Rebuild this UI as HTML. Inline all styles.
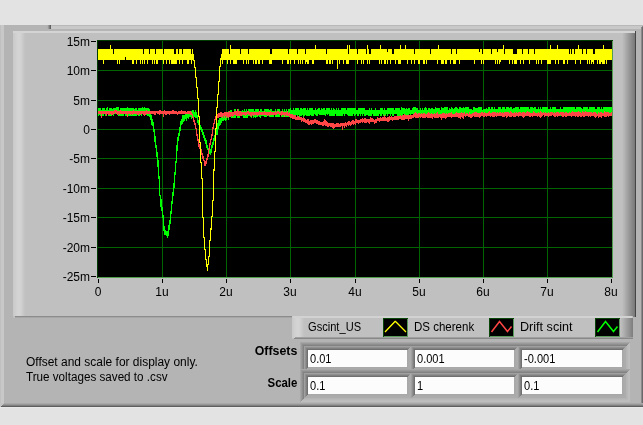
<!DOCTYPE html>
<html><head><meta charset="utf-8"><title>Scope display</title>
<style>
html,body{margin:0;padding:0}
body{width:643px;height:425px;background:#e3e3e3;position:relative;overflow:hidden;font-family:"Liberation Sans",sans-serif;font-size:12px;color:#000}
div{position:absolute;box-sizing:border-box}
svg{position:absolute;display:block}
.chrome{left:0;top:0}
.plot{left:97px;top:40px}
.tk{background:#000}
.yl,.xl,.lt,.cell,.b,.tx{will-change:transform}
.sx{display:inline-block;transform-origin:0 50%;white-space:nowrap}
.yl{left:41px;width:49px;text-align:right;height:16px;line-height:16px;white-space:nowrap}
.xl{top:284px;width:40px;text-align:center;height:16px;line-height:16px;white-space:nowrap}
.lt{top:319px;height:16px;line-height:16px;white-space:nowrap}
.cell{height:17px;line-height:17px;white-space:nowrap}
.b{font-weight:bold;white-space:nowrap;height:16px;line-height:16px}
.b .sx{transform-origin:100% 50%}
</style></head><body>
<svg class="chrome" width="643" height="425" viewBox="0 0 643 425" shape-rendering="crispEdges"><rect x="0" y="25" width="643" height="382" fill="#b4b4b4"/><rect x="0" y="25" width="1" height="382" fill="#c0c0c0"/><rect x="1" y="25" width="3" height="380" fill="#c8c8c8"/><rect x="47" y="25" width="596" height="1" fill="#b8b8b8"/><rect x="51" y="26" width="592" height="3" fill="#c8c8c8"/><rect x="47" y="25" width="1" height="4" fill="#b0b0b0"/><rect x="48" y="25" width="1" height="4" fill="#989898"/><rect x="49" y="25" width="1" height="4" fill="#7c7c7c"/><rect x="50" y="25" width="1" height="4" fill="#606060"/><polygon points="641,28 643,25 643,407 641,407" fill="#8a8a8a"/><polygon points="642,27 643,26 643,407 642,407" fill="#6a6a6a"/><rect x="0" y="403" width="643" height="1" fill="#a8a8a8"/><rect x="0" y="404" width="643" height="1" fill="#989898"/><rect x="0" y="405" width="643" height="1" fill="#808080"/><rect x="0" y="406" width="643" height="1" fill="#5e5e5e"/><rect x="0" y="407" width="643" height="1" fill="#e9e9e9"/><polygon points="0,403 4,403 0,407" fill="#c4c4c4"/><rect x="13" y="31" width="623" height="286" fill="#c0c0c0"/><rect x="13" y="31" width="1" height="285" fill="#cacaca"/><rect x="14" y="31" width="1" height="285" fill="#cccccc"/><rect x="15" y="31" width="1" height="285" fill="#cfcfcf"/><rect x="16" y="31" width="1" height="285" fill="#d1d1d1"/><rect x="17" y="31" width="1" height="285" fill="#d3d3d3"/><rect x="18" y="31" width="1" height="285" fill="#d4d4d4"/><rect x="19" y="31" width="1" height="285" fill="#d4d4d4"/><rect x="20" y="31" width="1" height="285" fill="#d2d2d2"/><rect x="21" y="31" width="1" height="285" fill="#cfcfcf"/><rect x="22" y="31" width="1" height="285" fill="#cbcbcb"/><rect x="23" y="31" width="1" height="285" fill="#c7c7c7"/><rect x="24" y="31" width="1" height="285" fill="#c3c3c3"/><rect x="25" y="31" width="1" height="285" fill="#c1c1c1"/><rect x="13" y="31" width="622" height="2" fill="#d4d4d4"/><rect x="622" y="33" width="1" height="284" fill="#bebebe"/><rect x="623" y="33" width="1" height="284" fill="#b8b8b8"/><rect x="624" y="33" width="1" height="284" fill="#b3b3b3"/><rect x="625" y="33" width="1" height="284" fill="#adadad"/><rect x="626" y="33" width="1" height="284" fill="#a7a7a7"/><rect x="627" y="33" width="1" height="284" fill="#a2a2a2"/><rect x="628" y="33" width="1" height="284" fill="#9c9c9c"/><rect x="629" y="33" width="1" height="284" fill="#969696"/><rect x="630" y="33" width="1" height="284" fill="#919191"/><rect x="631" y="33" width="1" height="284" fill="#8b8b8b"/><rect x="632" y="33" width="1" height="284" fill="#858585"/><rect x="633" y="33" width="1" height="284" fill="#808080"/><rect x="634" y="33" width="1" height="284" fill="#7a7a7a"/><polygon points="622,31 635,31 622,33" fill="#d4d4d4"/><rect x="635" y="31" width="1" height="286" fill="#464646"/><rect x="15" y="316" width="278" height="1" fill="#8c8c8c"/><rect x="15" y="317" width="278" height="1" fill="#a6a6a6"/><polygon points="13,316 15,316 15,318 13,318" fill="#c0c0c0"/><rect x="292" y="316" width="341" height="23" fill="#c0c0c0"/><rect x="292" y="316" width="1" height="22" fill="#cacaca"/><rect x="293" y="316" width="1" height="22" fill="#cccccc"/><rect x="294" y="316" width="1" height="22" fill="#cfcfcf"/><rect x="295" y="316" width="1" height="22" fill="#d1d1d1"/><rect x="296" y="316" width="1" height="22" fill="#d3d3d3"/><rect x="297" y="316" width="1" height="22" fill="#d4d4d4"/><rect x="298" y="316" width="1" height="22" fill="#d4d4d4"/><rect x="299" y="316" width="1" height="22" fill="#d2d2d2"/><rect x="300" y="316" width="1" height="22" fill="#cfcfcf"/><rect x="301" y="316" width="1" height="22" fill="#cbcbcb"/><rect x="302" y="316" width="1" height="22" fill="#c7c7c7"/><rect x="303" y="316" width="1" height="22" fill="#c3c3c3"/><rect x="304" y="316" width="1" height="22" fill="#c1c1c1"/><rect x="293" y="316" width="339" height="2" fill="#d2d2d2"/><rect x="621" y="318" width="1" height="21" fill="#bcbcbc"/><rect x="622" y="318" width="1" height="21" fill="#b7b7b7"/><rect x="623" y="318" width="1" height="21" fill="#b1b1b1"/><rect x="624" y="318" width="1" height="21" fill="#acacac"/><rect x="625" y="318" width="1" height="21" fill="#a6a6a6"/><rect x="626" y="318" width="1" height="21" fill="#a1a1a1"/><rect x="627" y="318" width="1" height="21" fill="#9b9b9b"/><rect x="628" y="318" width="1" height="21" fill="#969696"/><rect x="629" y="318" width="1" height="21" fill="#909090"/><rect x="630" y="318" width="1" height="21" fill="#8b8b8b"/><rect x="631" y="318" width="1" height="21" fill="#858585"/><rect x="632" y="318" width="1" height="21" fill="#808080"/><rect x="295" y="337" width="338" height="1" fill="#a0a0a0"/><rect x="294" y="338" width="339" height="1" fill="#888888"/><rect x="383" y="318" width="25" height="19" fill="#000"/><polygon points="383,318 408,318 407,319 384,319 384,336 383,337" fill="#0a460a"/><polygon points="408,318 408,337 383,337 384,336 407,336 407,319" fill="#5a9a5a"/><path d="M385 332L395 321.5L395.5 321.5L406 332" stroke="#ffff00" stroke-width="1.3" fill="none" shape-rendering="auto"/><rect x="489" y="318" width="25" height="19" fill="#000"/><polygon points="489,318 514,318 513,319 490,319 490,336 489,337" fill="#0a460a"/><polygon points="514,318 514,337 489,337 490,336 513,336 513,319" fill="#5a9a5a"/><path d="M491.5 332L499.5 321.5L507.5 331.5L511.5 326.5" stroke="#ff4646" stroke-width="1.5" fill="none" shape-rendering="auto"/><rect x="595" y="318" width="25" height="19" fill="#000"/><polygon points="595,318 620,318 619,319 596,319 596,336 595,337" fill="#0a460a"/><polygon points="620,318 620,337 595,337 596,336 619,336 619,319" fill="#5a9a5a"/><path d="M597.5 332L605.5 321.5L613.5 331.5L617.5 326.5" stroke="#00ff00" stroke-width="1.5" fill="none" shape-rendering="auto"/><rect x="300" y="342" width="330" height="33" fill="#a0a0a0"/><polygon points="300,342 630,342 629,343 301,343 301,374 300,375" fill="#a6a6a6"/><polygon points="630,342 630,375 300,375 301,374 629,374 629,343" fill="#bebebe"/><polygon points="301,343 629,343 628,344 302,344 302,373 301,374" fill="#9a9a9a"/><polygon points="629,343 629,374 301,374 302,373 628,373 628,344" fill="#bcbcbc"/><polygon points="302,344 628,344 627,345 303,345 303,372 302,373" fill="#8e8e8e"/><polygon points="628,344 628,373 302,373 303,372 627,372 627,345" fill="#b8b8b8"/><polygon points="303,345 627,345 626,346 304,346 304,371 303,372" fill="#828282"/><polygon points="627,345 627,372 303,372 304,371 626,371 626,346" fill="#b4b4b4"/><polygon points="304,346 411,346 410,347 305,347 305,370 304,371" fill="#a0a0a0"/><polygon points="411,346 411,371 304,371 305,370 410,370 410,347" fill="#acacac"/><polygon points="305,347 410,347 409,348 306,348 306,369 305,370" fill="#909090"/><polygon points="410,347 410,370 305,370 306,369 409,369 409,348" fill="#acacac"/><polygon points="306,348 409,348 408,349 307,349 307,368 306,369" fill="#808080"/><polygon points="409,348 409,369 306,369 307,368 408,368 408,349" fill="#aaaaaa"/><polygon points="307,349 408,349 407,350 308,350 308,367 307,368" fill="#707070"/><polygon points="408,349 408,368 307,368 308,367 407,367 407,350" fill="#a8a8a8"/><rect x="308" y="350" width="99" height="17" fill="#fcfcfc"/><polygon points="411,346 518,346 517,347 412,347 412,370 411,371" fill="#a0a0a0"/><polygon points="518,346 518,371 411,371 412,370 517,370 517,347" fill="#acacac"/><polygon points="412,347 517,347 516,348 413,348 413,369 412,370" fill="#909090"/><polygon points="517,347 517,370 412,370 413,369 516,369 516,348" fill="#acacac"/><polygon points="413,348 516,348 515,349 414,349 414,368 413,369" fill="#808080"/><polygon points="516,348 516,369 413,369 414,368 515,368 515,349" fill="#aaaaaa"/><polygon points="414,349 515,349 514,350 415,350 415,367 414,368" fill="#707070"/><polygon points="515,349 515,368 414,368 415,367 514,367 514,350" fill="#a8a8a8"/><rect x="415" y="350" width="99" height="17" fill="#fcfcfc"/><polygon points="518,346 626,346 625,347 519,347 519,370 518,371" fill="#a0a0a0"/><polygon points="626,346 626,371 518,371 519,370 625,370 625,347" fill="#acacac"/><polygon points="519,347 625,347 624,348 520,348 520,369 519,370" fill="#909090"/><polygon points="625,347 625,370 519,370 520,369 624,369 624,348" fill="#acacac"/><polygon points="520,348 624,348 623,349 521,349 521,368 520,369" fill="#808080"/><polygon points="624,348 624,369 520,369 521,368 623,368 623,349" fill="#aaaaaa"/><polygon points="521,349 623,349 622,350 522,350 522,367 521,368" fill="#707070"/><polygon points="623,349 623,368 521,368 522,367 622,367 622,350" fill="#a8a8a8"/><rect x="522" y="350" width="100" height="17" fill="#fcfcfc"/><rect x="300" y="369" width="330" height="33" fill="#a0a0a0"/><polygon points="300,369 630,369 629,370 301,370 301,401 300,402" fill="#a6a6a6"/><polygon points="630,369 630,402 300,402 301,401 629,401 629,370" fill="#bebebe"/><polygon points="301,370 629,370 628,371 302,371 302,400 301,401" fill="#9a9a9a"/><polygon points="629,370 629,401 301,401 302,400 628,400 628,371" fill="#bcbcbc"/><polygon points="302,371 628,371 627,372 303,372 303,399 302,400" fill="#8e8e8e"/><polygon points="628,371 628,400 302,400 303,399 627,399 627,372" fill="#b8b8b8"/><polygon points="303,372 627,372 626,373 304,373 304,398 303,399" fill="#828282"/><polygon points="627,372 627,399 303,399 304,398 626,398 626,373" fill="#b4b4b4"/><polygon points="304,373 411,373 410,374 305,374 305,397 304,398" fill="#a0a0a0"/><polygon points="411,373 411,398 304,398 305,397 410,397 410,374" fill="#acacac"/><polygon points="305,374 410,374 409,375 306,375 306,396 305,397" fill="#909090"/><polygon points="410,374 410,397 305,397 306,396 409,396 409,375" fill="#acacac"/><polygon points="306,375 409,375 408,376 307,376 307,395 306,396" fill="#808080"/><polygon points="409,375 409,396 306,396 307,395 408,395 408,376" fill="#aaaaaa"/><polygon points="307,376 408,376 407,377 308,377 308,394 307,395" fill="#707070"/><polygon points="408,376 408,395 307,395 308,394 407,394 407,377" fill="#a8a8a8"/><rect x="308" y="377" width="99" height="17" fill="#fcfcfc"/><polygon points="411,373 518,373 517,374 412,374 412,397 411,398" fill="#a0a0a0"/><polygon points="518,373 518,398 411,398 412,397 517,397 517,374" fill="#acacac"/><polygon points="412,374 517,374 516,375 413,375 413,396 412,397" fill="#909090"/><polygon points="517,374 517,397 412,397 413,396 516,396 516,375" fill="#acacac"/><polygon points="413,375 516,375 515,376 414,376 414,395 413,396" fill="#808080"/><polygon points="516,375 516,396 413,396 414,395 515,395 515,376" fill="#aaaaaa"/><polygon points="414,376 515,376 514,377 415,377 415,394 414,395" fill="#707070"/><polygon points="515,376 515,395 414,395 415,394 514,394 514,377" fill="#a8a8a8"/><rect x="415" y="377" width="99" height="17" fill="#fcfcfc"/><polygon points="518,373 626,373 625,374 519,374 519,397 518,398" fill="#a0a0a0"/><polygon points="626,373 626,398 518,398 519,397 625,397 625,374" fill="#acacac"/><polygon points="519,374 625,374 624,375 520,375 520,396 519,397" fill="#909090"/><polygon points="625,374 625,397 519,397 520,396 624,396 624,375" fill="#acacac"/><polygon points="520,375 624,375 623,376 521,376 521,395 520,396" fill="#808080"/><polygon points="624,375 624,396 520,396 521,395 623,395 623,376" fill="#aaaaaa"/><polygon points="521,376 623,376 622,377 522,377 522,394 521,395" fill="#707070"/><polygon points="623,376 623,395 521,395 522,394 622,394 622,377" fill="#a8a8a8"/><rect x="522" y="377" width="100" height="17" fill="#fcfcfc"/></svg>
<svg class="plot" width="516" height="238" viewBox="0 0 516 238" shape-rendering="crispEdges">
<rect x="0" y="0" width="516" height="238" fill="#000"/>
<path d="M65.5 1v236M129.5 1v236M193.5 1v236M258.5 1v236M322.5 1v236M386.5 1v236M450.5 1v236M1 30.5h514M1 60.5h514M1 89.5h514M1 118.5h514M1 148.5h514M1 177.5h514M1 207.5h514" stroke="#006400" stroke-width="1" fill="none"/>
<path d="M1.5 68v8M2.5 68v7M3.5 68v8M4.5 70v5M5.5 68v8M6.5 68v8M7.5 68v6M8.5 70v6M9.5 68v8M10.5 67v7M11.5 70v6M12.5 68v8M13.5 68v8M14.5 68v8M15.5 69v5M16.5 68v8M17.5 68v6M18.5 68v6M19.5 67v7M20.5 67v7M21.5 67v9M22.5 70v6M23.5 68v8M24.5 68v8M25.5 68v8M26.5 68v8M27.5 68v6M28.5 68v8M29.5 68v8M30.5 67v9M31.5 68v8M32.5 68v8M33.5 68v8M34.5 68v8M35.5 68v8M36.5 68v8M37.5 69v7M38.5 68v8M39.5 68v8M40.5 70v4M41.5 68v8M42.5 68v8M43.5 68v6M44.5 68v8M45.5 67v7M46.5 68v6M47.5 67v7M48.5 68v6M49.5 68v7M50.5 68v8M51.5 68v8M52.5 69v8M53.5 73v7M54.5 75v10M55.5 79v7M56.5 82v10M57.5 89v13M58.5 96v12M59.5 105v12M60.5 112v15M61.5 120v19M62.5 136v20M63.5 155v12M64.5 159v12M65.5 167v11M66.5 175v16M67.5 186v9M68.5 190v5M69.5 191v5M70.5 191v7M71.5 185v11M72.5 180v10M73.5 171v13M74.5 161v13M75.5 152v12M76.5 143v13M77.5 132v16M78.5 121v14M79.5 105v18M80.5 97v14M81.5 93v8M82.5 87v9M83.5 81v10M84.5 79v6M85.5 75v9M86.5 75v7M87.5 75v6M88.5 72v7M89.5 72v9M90.5 72v6M91.5 71v8M92.5 73v4M93.5 73v4M94.5 71v8M95.5 70v7M96.5 70v8M97.5 72v5M98.5 70v8M99.5 72v6M100.5 75v8M101.5 80v5M102.5 81v7M103.5 85v5M104.5 87v5M105.5 89v6M106.5 92v6M107.5 95v6M108.5 98v6M109.5 100v8M110.5 105v5M111.5 108v5M112.5 109v5M113.5 109v6M114.5 105v8M115.5 102v6M116.5 98v7M117.5 95v6M118.5 91v7M119.5 89v6M120.5 83v12M121.5 80v9M122.5 78v8M123.5 78v7M124.5 77v6M125.5 76v5M126.5 74v7M127.5 73v7M128.5 75v6M129.5 72v8M130.5 73v5M131.5 71v9M132.5 71v6M133.5 70v7M134.5 70v8M135.5 72v6M136.5 72v6M137.5 69v9M138.5 69v9M139.5 71v5M140.5 69v9M141.5 69v9M142.5 71v7M143.5 71v5M144.5 71v5M145.5 70v6M146.5 71v7M147.5 69v9M148.5 71v7M149.5 69v9M150.5 71v7M151.5 69v7M152.5 69v7M153.5 69v8M154.5 69v9M155.5 69v7M156.5 69v9M157.5 71v6M158.5 69v9M159.5 69v8M160.5 69v8M161.5 69v7M162.5 71v6M163.5 69v9M164.5 69v7M165.5 71v5M166.5 71v5M167.5 69v8M168.5 69v8M169.5 69v8M170.5 69v7M171.5 69v7M172.5 70v7M173.5 69v8M174.5 69v8M175.5 71v6M176.5 71v6M177.5 71v4M178.5 69v8M179.5 71v6M180.5 69v8M181.5 69v8M182.5 69v8M183.5 71v4M184.5 71v6M185.5 69v8M186.5 71v6M187.5 69v8M188.5 71v6M189.5 69v8M190.5 71v6M191.5 69v8M192.5 69v6M193.5 68v9M194.5 70v7M195.5 70v6M196.5 68v9M197.5 70v5M198.5 68v7M199.5 68v7M200.5 68v8M201.5 68v7M202.5 70v7M203.5 68v8M204.5 68v8M205.5 69v6M206.5 68v9M207.5 68v8M208.5 68v7M209.5 70v6M210.5 68v8M211.5 70v6M212.5 68v8M213.5 68v7M214.5 68v8M215.5 68v8M216.5 70v6M217.5 70v4M218.5 68v7M219.5 70v6M220.5 69v7M221.5 68v6M222.5 68v7M223.5 70v5M224.5 68v7M225.5 69v6M226.5 68v7M227.5 68v7M228.5 70v6M229.5 68v6M230.5 68v7M231.5 68v6M232.5 68v8M233.5 70v6M234.5 68v8M235.5 70v6M236.5 68v8M237.5 69v7M238.5 70v4M239.5 68v8M240.5 70v6M241.5 68v8M242.5 70v6M243.5 70v6M244.5 68v8M245.5 68v8M246.5 68v6M247.5 68v8M248.5 68v6M249.5 70v4M250.5 68v7M251.5 68v8M252.5 68v8M253.5 68v8M254.5 68v8M255.5 68v8M256.5 68v6M257.5 68v8M258.5 68v7M259.5 70v4M260.5 70v6M261.5 68v8M262.5 68v6M263.5 68v8M264.5 68v6M265.5 68v8M266.5 68v6M267.5 68v8M268.5 70v6M269.5 70v5M270.5 70v5M271.5 70v6M272.5 68v8M273.5 70v6M274.5 68v8M275.5 70v4M276.5 70v6M277.5 70v6M278.5 68v8M279.5 70v6M280.5 70v6M281.5 70v6M282.5 70v4M283.5 68v8M284.5 68v8M285.5 68v6M286.5 70v6M287.5 68v8M288.5 70v6M289.5 70v4M290.5 68v8M291.5 68v6M292.5 68v6M293.5 68v8M294.5 68v6M295.5 68v8M296.5 68v8M297.5 70v4M298.5 68v6M299.5 68v6M300.5 68v8M301.5 68v8M302.5 68v8M303.5 70v6M304.5 67v9M305.5 68v8M306.5 68v6M307.5 68v6M308.5 69v7M309.5 68v8M310.5 69v7M311.5 68v8M312.5 68v6M313.5 70v6M314.5 70v4M315.5 68v6M316.5 67v9M317.5 67v7M318.5 67v7M319.5 68v8M320.5 68v8M321.5 70v6M322.5 70v4M323.5 68v6M324.5 70v6M325.5 68v6M326.5 70v4M327.5 68v8M328.5 67v9M329.5 68v6M330.5 70v6M331.5 68v8M332.5 68v6M333.5 69v7M334.5 68v8M335.5 68v8M336.5 69v7M337.5 69v7M338.5 67v9M339.5 68v8M340.5 68v6M341.5 68v6M342.5 68v6M343.5 70v4M344.5 67v9M345.5 68v6M346.5 68v8M347.5 67v9M348.5 67v9M349.5 67v9M350.5 67v9M351.5 70v4M352.5 68v8M353.5 69v5M354.5 67v7M355.5 68v8M356.5 69v7M357.5 68v8M358.5 67v7M359.5 67v9M360.5 68v8M361.5 69v5M362.5 67v7M363.5 67v7M364.5 68v6M365.5 68v6M366.5 67v9M367.5 68v8M368.5 67v9M369.5 67v9M370.5 67v9M371.5 67v7M372.5 69v7M373.5 69v7M374.5 69v7M375.5 70v6M376.5 67v7M377.5 67v9M378.5 68v8M379.5 68v8M380.5 68v6M381.5 67v7M382.5 67v8M383.5 67v9M384.5 67v9M385.5 70v6M386.5 69v5M387.5 69v7M388.5 69v7M389.5 68v8M390.5 69v7M391.5 67v9M392.5 67v7M393.5 69v6M394.5 67v7M395.5 67v7M396.5 69v6M397.5 67v8M398.5 69v5M399.5 69v5M400.5 69v7M401.5 67v7M402.5 67v9M403.5 67v7M404.5 69v5M405.5 67v7M406.5 67v7M407.5 67v7M408.5 69v7M409.5 67v9M410.5 67v8M411.5 67v9M412.5 68v6M413.5 67v7M414.5 67v7M415.5 69v5M416.5 68v8M417.5 68v6M418.5 67v9M419.5 67v9M420.5 67v7M421.5 67v7M422.5 69v7M423.5 67v9M424.5 67v9M425.5 67v8M426.5 67v9M427.5 67v7M428.5 67v9M429.5 67v9M430.5 67v8M431.5 67v9M432.5 69v5M433.5 67v7M434.5 67v9M435.5 67v8M436.5 68v6M437.5 67v9M438.5 67v7M439.5 69v6M440.5 69v5M441.5 67v9M442.5 69v7M443.5 67v7M444.5 69v5M445.5 67v7M446.5 67v7M447.5 67v9M448.5 67v7M449.5 67v9M450.5 67v9M451.5 69v5M452.5 69v6M453.5 67v7M454.5 69v6M455.5 67v7M456.5 67v8M457.5 67v9M458.5 67v7M459.5 69v7M460.5 69v5M461.5 69v5M462.5 69v5M463.5 67v9M464.5 69v6M465.5 69v7M466.5 67v9M467.5 67v9M468.5 67v9M469.5 67v8M470.5 67v8M471.5 67v9M472.5 67v8M473.5 67v7M474.5 67v8M475.5 67v8M476.5 67v9M477.5 67v8M478.5 69v7M479.5 67v8M480.5 67v9M481.5 67v7M482.5 67v8M483.5 67v8M484.5 68v7M485.5 69v7M486.5 67v8M487.5 67v7M488.5 67v9M489.5 67v7M490.5 67v8M491.5 69v6M492.5 67v8M493.5 67v7M494.5 67v8M495.5 67v8M496.5 67v8M497.5 67v9M498.5 69v6M499.5 69v5M500.5 67v8M501.5 67v9M502.5 67v9M503.5 69v7M504.5 67v9M505.5 69v6M506.5 67v7M507.5 67v7M508.5 67v7M509.5 67v7M510.5 67v8M511.5 67v8M512.5 67v7M513.5 67v7M514.5 67v8" stroke="#00ff00" stroke-width="1" fill="none"/>
<path d="M1.5 71v3M2.5 71v3M3.5 71v3M4.5 71v7M5.5 71v3M6.5 71v3M7.5 71v3M8.5 71v3M9.5 71v5M10.5 71v3M11.5 71v4M12.5 71v4M13.5 71v3M14.5 71v4M15.5 71v4M16.5 71v3M17.5 70v4M18.5 70v3M19.5 70v4M20.5 71v4M21.5 71v3M22.5 71v4M23.5 70v4M24.5 71v3M25.5 71v3M26.5 71v3M27.5 71v3M28.5 71v3M29.5 71v3M30.5 71v6M31.5 71v3M32.5 71v3M33.5 71v4M34.5 71v3M35.5 71v4M36.5 70v4M37.5 71v3M38.5 71v3M39.5 71v3M40.5 71v4M41.5 71v4M42.5 71v3M43.5 71v4M44.5 71v3M45.5 71v3M46.5 71v4M47.5 71v5M48.5 71v4M49.5 70v4M50.5 71v3M51.5 71v3M52.5 71v3M53.5 71v3M54.5 71v3M55.5 71v3M56.5 71v3M57.5 71v4M58.5 71v4M59.5 71v2M60.5 71v3M61.5 71v3M62.5 70v5M63.5 70v4M64.5 71v3M65.5 71v3M66.5 71v6M67.5 70v4M68.5 71v4M69.5 71v4M70.5 71v3M71.5 71v3M72.5 71v4M73.5 71v3M74.5 71v3M75.5 70v4M76.5 70v4M77.5 71v3M78.5 71v3M79.5 71v3M80.5 72v3M81.5 71v3M82.5 71v3M83.5 71v3M84.5 70v4M85.5 71v3M86.5 71v3M87.5 71v3M88.5 71v3M89.5 72v2M90.5 71v3M91.5 71v3M92.5 71v3M93.5 71v4M94.5 72v3M95.5 74v4M96.5 77v5M97.5 80v5M98.5 83v6M99.5 88v8M100.5 94v7M101.5 99v8M102.5 104v5M103.5 108v5M104.5 109v6M105.5 113v6M106.5 116v5M107.5 120v6M108.5 121v5M109.5 118v6M110.5 114v6M111.5 109v8M112.5 103v7M113.5 99v6M114.5 94v6M115.5 87v9M116.5 83v6M117.5 79v5M118.5 76v4M119.5 74v6M120.5 74v4M121.5 73v5M122.5 73v4M123.5 72v5M124.5 72v5M125.5 73v5M126.5 73v3M127.5 72v6M128.5 72v4M129.5 72v6M130.5 72v5M131.5 72v6M132.5 71v6M133.5 72v5M134.5 72v4M135.5 72v5M136.5 72v4M137.5 71v4M138.5 71v4M139.5 71v5M140.5 69v7M141.5 71v5M142.5 71v5M143.5 71v5M144.5 72v4M145.5 72v3M146.5 72v3M147.5 72v3M148.5 72v4M149.5 72v3M150.5 71v3M151.5 71v4M152.5 72v3M153.5 72v4M154.5 72v5M155.5 72v3M156.5 72v4M157.5 72v3M158.5 72v3M159.5 72v3M160.5 72v4M161.5 72v3M162.5 71v4M163.5 72v3M164.5 72v3M165.5 72v3M166.5 72v3M167.5 71v4M168.5 72v3M169.5 72v3M170.5 72v4M171.5 72v3M172.5 72v4M173.5 71v4M174.5 72v3M175.5 72v3M176.5 72v3M177.5 72v3M178.5 71v4M179.5 72v3M180.5 71v3M181.5 71v3M182.5 72v3M183.5 72v3M184.5 71v5M185.5 71v4M186.5 72v3M187.5 72v5M188.5 72v3M189.5 72v4M190.5 71v5M191.5 73v3M192.5 72v5M193.5 74v4M194.5 74v4M195.5 74v5M196.5 75v4M197.5 75v4M198.5 75v5M199.5 77v3M200.5 76v4M201.5 76v4M202.5 77v3M203.5 77v3M204.5 77v5M205.5 78v3M206.5 77v5M207.5 78v4M208.5 79v4M209.5 80v3M210.5 79v5M211.5 79v6M212.5 81v4M213.5 80v4M214.5 80v5M215.5 80v4M216.5 80v4M217.5 79v4M218.5 79v4M219.5 80v4M220.5 80v4M221.5 81v4M222.5 81v4M223.5 82v3M224.5 82v3M225.5 82v4M226.5 81v5M227.5 79v6M228.5 80v6M229.5 81v5M230.5 82v5M231.5 83v4M232.5 83v3M233.5 83v4M234.5 83v4M235.5 83v5M236.5 83v6M237.5 84v4M238.5 84v3M239.5 83v4M240.5 83v4M241.5 83v4M242.5 84v3M243.5 83v4M244.5 83v3M245.5 83v7M246.5 83v3M247.5 83v5M248.5 82v4M249.5 83v4M250.5 82v3M251.5 81v5M252.5 81v4M253.5 82v4M254.5 81v4M255.5 80v4M256.5 80v5M257.5 81v3M258.5 79v6M259.5 79v4M260.5 80v3M261.5 80v4M262.5 80v3M263.5 79v4M264.5 79v3M265.5 78v5M266.5 79v3M267.5 78v5M268.5 78v5M269.5 79v4M270.5 79v3M271.5 79v4M272.5 79v5M273.5 77v5M274.5 78v4M275.5 78v4M276.5 79v3M277.5 80v4M278.5 79v4M279.5 79v4M280.5 77v4M281.5 78v3M282.5 78v4M283.5 77v4M284.5 78v3M285.5 77v4M286.5 77v4M287.5 75v6M288.5 77v4M289.5 78v3M290.5 77v5M291.5 77v5M292.5 76v5M293.5 77v3M294.5 76v4M295.5 77v4M296.5 77v3M297.5 76v4M298.5 76v4M299.5 76v4M300.5 76v4M301.5 76v4M302.5 76v3M303.5 75v4M304.5 76v4M305.5 75v5M306.5 75v5M307.5 74v6M308.5 75v4M309.5 75v4M310.5 75v4M311.5 75v6M312.5 75v4M313.5 75v4M314.5 75v4M315.5 75v3M316.5 74v4M317.5 73v4M318.5 72v6M319.5 73v5M320.5 74v4M321.5 73v5M322.5 73v4M323.5 74v4M324.5 73v4M325.5 74v4M326.5 73v5M327.5 73v5M328.5 74v4M329.5 74v3M330.5 73v5M331.5 72v6M332.5 73v5M333.5 74v4M334.5 73v5M335.5 74v5M336.5 74v3M337.5 73v5M338.5 74v4M339.5 73v5M340.5 72v6M341.5 74v4M342.5 74v3M343.5 74v4M344.5 74v6M345.5 73v5M346.5 73v5M347.5 73v5M348.5 74v5M349.5 73v5M350.5 74v3M351.5 73v4M352.5 73v4M353.5 73v4M354.5 72v6M355.5 74v3M356.5 74v3M357.5 74v3M358.5 73v4M359.5 72v5M360.5 73v4M361.5 73v5M362.5 73v5M363.5 73v6M364.5 72v5M365.5 73v5M366.5 73v6M367.5 72v4M368.5 74v3M369.5 73v3M370.5 73v3M371.5 74v3M372.5 72v5M373.5 74v4M374.5 74v4M375.5 73v4M376.5 73v3M377.5 72v5M378.5 72v5M379.5 72v5M380.5 73v4M381.5 73v4M382.5 73v5M383.5 73v4M384.5 72v4M385.5 72v4M386.5 73v4M387.5 72v5M388.5 73v3M389.5 73v4M390.5 73v3M391.5 72v4M392.5 71v5M393.5 73v4M394.5 73v3M395.5 72v5M396.5 72v5M397.5 72v5M398.5 72v4M399.5 73v4M400.5 72v4M401.5 73v3M402.5 72v4M403.5 72v4M404.5 73v3M405.5 72v5M406.5 73v4M407.5 72v5M408.5 72v4M409.5 72v6M410.5 72v5M411.5 72v4M412.5 73v4M413.5 71v6M414.5 72v5M415.5 73v3M416.5 73v4M417.5 72v5M418.5 73v4M419.5 72v4M420.5 73v3M421.5 72v5M422.5 72v4M423.5 72v4M424.5 73v3M425.5 72v5M426.5 72v6M427.5 72v5M428.5 73v3M429.5 72v4M430.5 71v5M431.5 72v4M432.5 72v5M433.5 73v4M434.5 73v3M435.5 73v4M436.5 71v5M437.5 72v4M438.5 73v3M439.5 73v3M440.5 73v4M441.5 72v4M442.5 73v4M443.5 71v7M444.5 72v5M445.5 73v3M446.5 72v3M447.5 73v4M448.5 72v4M449.5 73v3M450.5 73v3M451.5 72v5M452.5 73v3M453.5 72v4M454.5 72v4M455.5 72v3M456.5 73v3M457.5 72v5M458.5 73v4M459.5 72v4M460.5 72v5M461.5 72v4M462.5 73v3M463.5 72v3M464.5 72v4M465.5 72v5M466.5 72v5M467.5 73v3M468.5 72v5M469.5 72v5M470.5 73v3M471.5 73v3M472.5 72v4M473.5 73v3M474.5 72v5M475.5 71v5M476.5 72v4M477.5 72v4M478.5 72v5M479.5 72v4M480.5 72v5M481.5 71v6M482.5 72v4M483.5 72v5M484.5 73v4M485.5 71v5M486.5 72v5M487.5 72v5M488.5 71v5M489.5 72v4M490.5 72v4M491.5 72v5M492.5 72v4M493.5 72v5M494.5 72v4M495.5 73v3M496.5 72v4M497.5 72v5M498.5 72v6M499.5 73v4M500.5 74v2M501.5 72v6M502.5 73v4M503.5 72v5M504.5 72v6M505.5 73v3M506.5 73v3M507.5 71v6M508.5 72v5M509.5 72v5M510.5 72v4M511.5 72v5M512.5 73v3M513.5 73v3M514.5 72v4" stroke="#ff4646" stroke-width="1" fill="none"/>
<path d="M1.5 9v11M2.5 9v11M3.5 9v11M4.5 9v11M5.5 9v11M6.5 9v15M7.5 9v11M8.5 9v11M9.5 9v11M10.5 9v11M11.5 9v11M12.5 9v11M13.5 5v15M14.5 9v11M15.5 9v11M16.5 14v6M17.5 9v11M18.5 9v11M19.5 9v11M20.5 9v15M21.5 9v11M22.5 9v15M23.5 9v11M24.5 9v11M25.5 9v11M26.5 9v11M27.5 9v11M28.5 9v8M29.5 9v11M30.5 9v11M31.5 9v11M32.5 9v11M33.5 9v11M34.5 9v11M35.5 9v15M36.5 9v15M37.5 9v11M38.5 9v11M39.5 9v15M40.5 9v11M41.5 9v11M42.5 9v11M43.5 9v15M44.5 9v11M45.5 9v15M46.5 14v6M47.5 9v15M48.5 9v11M49.5 9v11M50.5 9v15M51.5 9v11M52.5 14v6M53.5 9v11M54.5 9v11M55.5 9v15M56.5 9v11M57.5 9v15M58.5 14v6M59.5 9v15M60.5 9v15M61.5 9v11M62.5 9v11M63.5 9v11M64.5 9v11M65.5 9v11M66.5 14v10M67.5 9v11M68.5 9v11M69.5 9v15M70.5 9v11M71.5 9v11M72.5 9v15M73.5 9v11M74.5 9v15M75.5 9v15M76.5 9v15M77.5 14v10M78.5 14v10M79.5 9v15M80.5 9v11M81.5 14v6M82.5 9v15M83.5 9v11M84.5 9v11M85.5 14v10M86.5 9v11M87.5 9v11M88.5 9v11M89.5 9v11M90.5 9v15M91.5 9v15M92.5 9v11M93.5 9v11M94.5 14v10M95.5 9v11M96.5 14v7M97.5 20v8M98.5 27v11M99.5 37v11M100.5 47v12M101.5 58v19M102.5 76v27M103.5 102v21M104.5 122v17M105.5 138v40M106.5 177v21M107.5 197v13M108.5 209v11M109.5 219v8M110.5 224v7M111.5 216v9M112.5 200v17M113.5 188v13M114.5 176v14M115.5 160v17M116.5 129v32M117.5 111v20M118.5 88v24M119.5 67v22M120.5 54v14M121.5 41v14M122.5 26v16M123.5 18v9M124.5 14v6M125.5 9v15M126.5 9v11M127.5 9v11M128.5 9v11M129.5 9v11M130.5 9v15M131.5 9v11M132.5 14v6M133.5 5v19M134.5 9v11M135.5 9v11M136.5 9v15M137.5 9v15M138.5 9v15M139.5 9v15M140.5 9v11M141.5 9v11M142.5 9v11M143.5 14v6M144.5 9v11M145.5 9v11M146.5 9v15M147.5 9v11M148.5 9v11M149.5 9v15M150.5 9v11M151.5 14v10M152.5 9v11M153.5 9v11M154.5 9v11M155.5 9v11M156.5 9v15M157.5 9v11M158.5 9v15M159.5 9v15M160.5 9v11M161.5 9v15M162.5 9v15M163.5 9v11M164.5 9v11M165.5 9v15M166.5 9v11M167.5 9v11M168.5 9v11M169.5 9v11M170.5 9v11M171.5 9v11M172.5 9v15M173.5 14v10M174.5 14v10M175.5 9v11M176.5 9v11M177.5 9v11M178.5 9v11M179.5 9v11M180.5 9v11M181.5 9v11M182.5 9v11M183.5 9v11M184.5 9v11M185.5 9v15M186.5 9v11M187.5 9v11M188.5 9v11M189.5 9v11M190.5 9v15M191.5 14v10M192.5 9v11M193.5 9v15M194.5 9v11M195.5 9v11M196.5 9v11M197.5 9v15M198.5 9v11M199.5 9v11M200.5 14v6M201.5 9v15M202.5 9v11M203.5 9v15M204.5 9v11M205.5 9v15M206.5 9v11M207.5 9v11M208.5 14v10M209.5 9v13M210.5 9v15M211.5 9v15M212.5 9v11M213.5 9v11M214.5 9v11M215.5 9v15M216.5 9v15M217.5 9v11M218.5 5v15M219.5 9v11M220.5 9v11M221.5 9v11M222.5 9v11M223.5 9v11M224.5 9v11M225.5 9v11M226.5 9v11M227.5 9v11M228.5 9v11M229.5 14v10M230.5 9v15M231.5 9v11M232.5 9v15M233.5 9v15M234.5 9v11M235.5 9v15M236.5 9v11M237.5 9v11M238.5 9v11M239.5 9v11M240.5 9v20M241.5 9v11M242.5 9v15M243.5 9v11M244.5 9v11M245.5 9v11M246.5 9v15M247.5 9v11M248.5 9v11M249.5 9v15M250.5 5v19M251.5 14v10M252.5 5v15M253.5 9v11M254.5 9v11M255.5 9v11M256.5 9v11M257.5 9v11M258.5 9v11M259.5 9v11M260.5 14v10M261.5 9v11M262.5 9v11M263.5 9v11M264.5 9v15M265.5 9v11M266.5 9v15M267.5 9v11M268.5 9v11M269.5 14v6M270.5 5v19M271.5 9v11M272.5 14v10M273.5 14v6M274.5 9v11M275.5 9v11M276.5 9v11M277.5 9v11M278.5 9v11M279.5 9v11M280.5 9v11M281.5 9v11M282.5 9v15M283.5 5v15M284.5 9v15M285.5 9v11M286.5 9v11M287.5 9v15M288.5 9v15M289.5 9v11M290.5 12v12M291.5 9v11M292.5 9v11M293.5 9v15M294.5 9v11M295.5 14v6M296.5 14v6M297.5 9v11M298.5 9v15M299.5 9v11M300.5 9v11M301.5 9v15M302.5 9v15M303.5 5v19M304.5 9v11M305.5 9v11M306.5 9v11M307.5 9v11M308.5 5v15M309.5 9v11M310.5 9v15M311.5 9v11M312.5 9v11M313.5 9v11M314.5 9v15M315.5 9v11M316.5 9v11M317.5 14v10M318.5 9v11M319.5 9v11M320.5 9v11M321.5 9v15M322.5 9v15M323.5 9v11M324.5 9v11M325.5 9v11M326.5 9v15M327.5 9v15M328.5 9v11M329.5 9v15M330.5 9v11M331.5 9v11M332.5 9v11M333.5 14v6M334.5 9v11M335.5 9v11M336.5 9v11M337.5 9v11M338.5 9v11M339.5 9v11M340.5 9v15M341.5 5v15M342.5 9v11M343.5 9v11M344.5 9v15M345.5 9v15M346.5 9v15M347.5 9v11M348.5 9v15M349.5 9v15M350.5 9v11M351.5 9v11M352.5 9v11M353.5 9v15M354.5 14v6M355.5 9v11M356.5 9v15M357.5 9v15M358.5 9v15M359.5 14v6M360.5 9v11M361.5 9v11M362.5 9v15M363.5 9v11M364.5 9v11M365.5 9v11M366.5 9v11M367.5 9v11M368.5 9v11M369.5 9v11M370.5 9v11M371.5 9v11M372.5 9v11M373.5 9v11M374.5 9v11M375.5 9v11M376.5 9v11M377.5 9v15M378.5 9v11M379.5 9v11M380.5 9v11M381.5 9v11M382.5 12v8M383.5 9v11M384.5 9v15M385.5 14v6M386.5 9v15M387.5 9v11M388.5 9v11M389.5 9v11M390.5 9v11M391.5 9v11M392.5 9v11M393.5 9v11M394.5 14v6M395.5 9v11M396.5 9v11M397.5 9v11M398.5 9v15M399.5 9v11M400.5 12v12M401.5 9v11M402.5 9v15M403.5 9v13M404.5 9v11M405.5 9v11M406.5 5v15M407.5 14v6M408.5 9v11M409.5 9v11M410.5 9v11M411.5 9v11M412.5 9v15M413.5 9v11M414.5 9v11M415.5 9v15M416.5 14v6M417.5 14v10M418.5 14v10M419.5 14v10M420.5 9v11M421.5 9v11M422.5 9v11M423.5 9v15M424.5 9v11M425.5 14v6M426.5 9v15M427.5 9v11M428.5 9v11M429.5 9v11M430.5 9v11M431.5 14v6M432.5 9v15M433.5 9v11M434.5 9v11M435.5 9v11M436.5 9v11M437.5 14v6M438.5 9v11M439.5 9v15M440.5 9v11M441.5 9v15M442.5 9v11M443.5 9v11M444.5 9v15M445.5 9v11M446.5 9v11M447.5 9v11M448.5 9v11M449.5 9v11M450.5 9v15M451.5 9v15M452.5 9v15M453.5 5v19M454.5 9v11M455.5 9v11M456.5 9v11M457.5 9v11M458.5 9v15M459.5 9v11M460.5 5v15M461.5 9v15M462.5 9v11M463.5 9v11M464.5 9v11M465.5 9v11M466.5 9v15M467.5 9v15M468.5 9v11M469.5 9v11M470.5 9v15M471.5 9v11M472.5 14v6M473.5 9v11M474.5 14v6M475.5 9v11M476.5 9v11M477.5 14v6M478.5 9v15M479.5 9v11M480.5 9v11M481.5 5v15M482.5 9v11M483.5 9v15M484.5 9v11M485.5 14v6M486.5 9v11M487.5 9v11M488.5 9v11M489.5 14v6M490.5 9v15M491.5 9v11M492.5 9v15M493.5 9v11M494.5 9v15M495.5 9v13M496.5 14v10M497.5 14v6M498.5 9v11M499.5 9v11M500.5 9v15M501.5 9v11M502.5 9v15M503.5 9v15M504.5 9v13M505.5 9v15M506.5 5v19M507.5 9v15M508.5 9v11M509.5 9v15M510.5 9v11M511.5 9v11M512.5 9v11M513.5 9v11M514.5 9v11" stroke="#ffff00" stroke-width="1" fill="none"/>
<path d="M0.5 238V0.5H516" stroke="#003c00" stroke-width="1" fill="none"/>
<path d="M515.5 1V237.5H1" stroke="#50a050" stroke-width="1" fill="none"/>
</svg>
<div class="tk" style="left:91px;top:41px;width:5px;height:1px"></div>
<div class="yl" style="top:34px">15m</div>
<div class="tk" style="left:91px;top:70px;width:5px;height:1px"></div>
<div class="yl" style="top:63px">10m</div>
<div class="tk" style="left:91px;top:100px;width:5px;height:1px"></div>
<div class="yl" style="top:93px">5m</div>
<div class="tk" style="left:91px;top:129px;width:5px;height:1px"></div>
<div class="yl" style="top:122px">0</div>
<div class="tk" style="left:91px;top:158px;width:5px;height:1px"></div>
<div class="yl" style="top:151px">-5m</div>
<div class="tk" style="left:91px;top:188px;width:5px;height:1px"></div>
<div class="yl" style="top:181px">-10m</div>
<div class="tk" style="left:91px;top:217px;width:5px;height:1px"></div>
<div class="yl" style="top:210px">-15m</div>
<div class="tk" style="left:91px;top:247px;width:5px;height:1px"></div>
<div class="yl" style="top:240px">-20m</div>
<div class="tk" style="left:91px;top:276px;width:5px;height:1px"></div>
<div class="yl" style="top:269px">-25m</div>
<div class="tk" style="left:98px;top:279px;width:1px;height:4px"></div>
<div class="xl" style="left:78px">0</div>
<div class="tk" style="left:162px;top:279px;width:1px;height:4px"></div>
<div class="xl" style="left:142px">1u</div>
<div class="tk" style="left:226px;top:279px;width:1px;height:4px"></div>
<div class="xl" style="left:206px">2u</div>
<div class="tk" style="left:290px;top:279px;width:1px;height:4px"></div>
<div class="xl" style="left:270px">3u</div>
<div class="tk" style="left:355px;top:279px;width:1px;height:4px"></div>
<div class="xl" style="left:335px">4u</div>
<div class="tk" style="left:419px;top:279px;width:1px;height:4px"></div>
<div class="xl" style="left:399px">5u</div>
<div class="tk" style="left:483px;top:279px;width:1px;height:4px"></div>
<div class="xl" style="left:463px">6u</div>
<div class="tk" style="left:547px;top:279px;width:1px;height:4px"></div>
<div class="xl" style="left:527px">7u</div>
<div class="tk" style="left:611px;top:279px;width:1px;height:4px"></div>
<div class="xl" style="left:591px">8u</div>
<div class="lt" style="left:308px"><span class="sx" style="transform:scaleX(0.925)">Gscint_US</span></div>
<div class="lt" style="left:414px"><span class="sx" style="transform:scaleX(0.96)">DS cherenk</span></div>
<div class="lt" style="left:520px"><span class="sx" style="transform:scaleX(1.05)">Drift scint</span></div>

<div class="tx" style="left:26px;top:355px;white-space:nowrap;line-height:15px"><span class="sx" style="transform:scaleX(0.997)">Offset and scale for display only.</span><br><span class="sx" style="transform:scaleX(0.972)">True voltages saved to .csv</span></div>
<div class="b" style="left:230px;top:343px;width:67px;text-align:right"><span class="sx" style="transform:scaleX(1.03)">Offsets</span></div>
<div class="b" style="left:230px;top:375px;width:67px;text-align:right"><span class="sx" style="transform:scaleX(0.95)">Scale</span></div>

<div class="cell" style="left:310px;top:351px"><span class="sx" style="transform:scaleX(0.92)">0.01</span></div>
<div class="cell" style="left:417px;top:351px"><span class="sx" style="transform:scaleX(0.92)">0.001</span></div>
<div class="cell" style="left:524px;top:351px"><span class="sx" style="transform:scaleX(0.92)">-0.001</span></div>
<div class="cell" style="left:310px;top:378px"><span class="sx" style="transform:scaleX(0.92)">0.1</span></div>
<div class="cell" style="left:417px;top:378px"><span class="sx" style="transform:scaleX(0.92)">1</span></div>
<div class="cell" style="left:524px;top:378px"><span class="sx" style="transform:scaleX(0.92)">0.1</span></div>
</body></html>
